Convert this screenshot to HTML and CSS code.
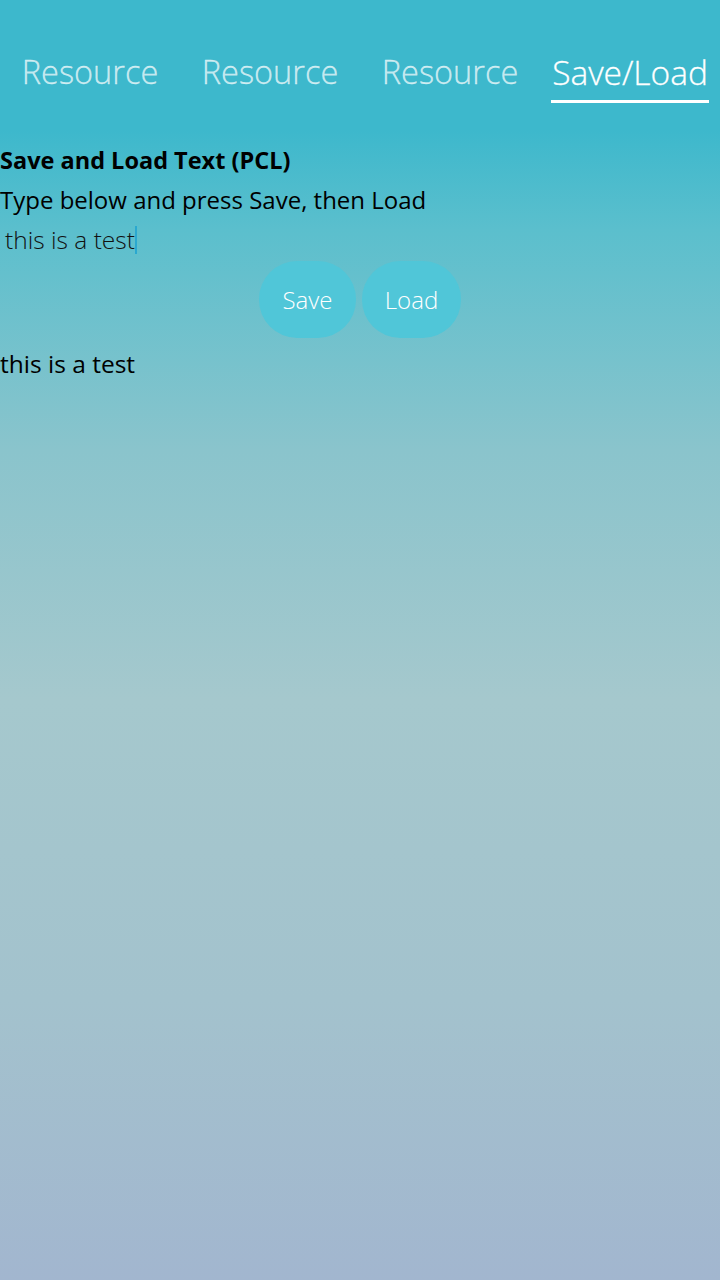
FILE: index.html
```html
<!DOCTYPE html>
<html>
<head>
<meta charset="utf-8">
<link rel="stylesheet" href="styles.css">
</head>
<body>
<div class="app">
  <nav class="tabs">
    <div class="tab">Resource</div>
    <div class="tab">Resource</div>
    <div class="tab">Resource</div>
    <div class="tab active"><span class="label">Save/Load</span></div>
  </nav>
  <main class="content">
    <div class="title">Save and Load Text (PCL)</div>
    <div class="hint">Type below and press Save, then Load</div>
    <div class="input"><span>this is a test</span><span class="caret"></span></div>
    <div class="buttons">
      <button class="btn save">Save</button>
      <button class="btn load">Load</button>
    </div>
    <div class="output">this is a test</div>
  </main>
</div>
</body>
</html>
```
FILE: styles.css
```css
html, body {
  margin: 0;
  padding: 0;
  width: 720px;
  height: 1280px;
  overflow: hidden;
}
body {
  font-family: "Open Sans", "Noto Sans", sans-serif;
  color: #000;
  background: linear-gradient(to bottom,
    #3db8cc 0px, #3db8cc 130px,
    #5bbfcd 230px,
    #8ac4cc 450px,
    #a5c8cd 700px,
    #a3c2cd 1000px,
    #a2b6cf 1280px);
}
.app {
  display: flex;
  flex-direction: column;
}
.tabs {
  display: grid;
  grid-template-columns: repeat(4, 180px);
  height: 140px;
  align-items: start;
}
.tab {
  padding-top: 49px;
  text-align: center;
  font-size: 32.5px;
  font-weight: 300;
  line-height: 46px;
  color: rgba(255,255,255,0.7);
  -webkit-text-stroke: 0.3px rgba(255,255,255,0.7);
}
.tab.active {
  color: #fff;
  -webkit-text-stroke: 0.3px #fff;
  font-size: 33.5px;
}
.tab.active .label {
  display: inline-block;
  border-bottom: 3px solid #fff;
  padding: 0 1px 5px;
}
.content {
  display: flex;
  flex-direction: column;
}
.title {
  font-weight: 700;
  font-size: 23.5px;
  line-height: 40px;
  height: 40px;
}
.hint {
  font-size: 24px;
  line-height: 40px;
}
.input {
  font-size: 24.5px;
  font-weight: 300;
  line-height: 40px;
  padding-left: 5px;
  color: #111;
  display: flex;
  align-items: center;
}
.caret {
  display: inline-block;
  width: 2px;
  height: 28px;
  background: #2aa8d0;
}
.buttons {
  display: flex;
  justify-content: center;
  gap: 6px;
  margin-top: 1px;
}
.btn {
  border: none;
  background: #50c6d8;
  color: #fff;
  font-family: "Open Sans", "Noto Sans", sans-serif;
  font-weight: 300;
  font-size: 24px;
  height: 77px;
  border-radius: 38px;
  padding: 0;
}
.btn.save { width: 97px; }
.btn.load { width: 99px; }
.output {
  font-size: 24.5px;
  line-height: 40px;
  margin-top: 6px;
}
```
